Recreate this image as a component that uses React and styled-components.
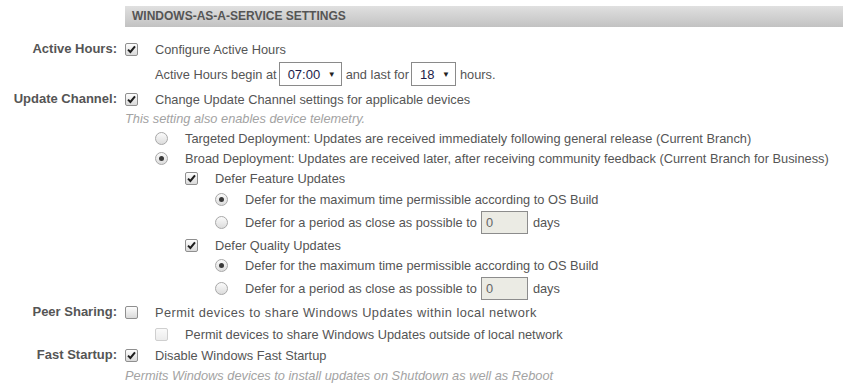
import React from 'react'
import styled, { createGlobalStyle } from 'styled-components'

const GlobalStyle = createGlobalStyle`
  body {
    margin: 0;
    background: #fff;
    font-family: "Liberation Sans", Arial, sans-serif;
    font-size: 12.8px;
    color: #555;
  }
`

const Page = styled.div`
  display: flex;
  flex-direction: column;
  padding-top: 6px;
`

const Field = styled.div`
  display: grid;
  grid-template-columns: 117px 1fr;
  column-gap: 8px;
`

const Label = styled.div`
  text-align: right;
  font-weight: bold;
  font-size: 13px;
  height: ${p => p.$h || 20}px;
  line-height: ${p => p.$h || 20}px;
  white-space: nowrap;
  color: #555;
`

const Header = styled.div`
  height: 21px;
  line-height: 21px;
  padding-left: 7px;
  margin-bottom: 12px;
  background: linear-gradient(#e0e0e0, #c2c2c2);
  font-size: 12px;
  font-weight: bold;
  color: #555;
`

const Lines = styled.div`
  display: flex;
  flex-direction: column;
`

const Row = styled.div`
  display: flex;
  align-items: center;
  height: ${p => p.$h || 20}px;
  padding-left: ${p => (p.$level || 0) * 30}px;
  white-space: nowrap;
`

const Text = styled.span`
  margin-left: 17px;
  letter-spacing: ${p => p.$spacing || 0}px;
`

const Note = styled(Row)`
  font-style: italic;
  color: #a3a3a3;
`

const Box = styled.span`
  flex: none;
  width: 13px;
  height: 13px;
  box-sizing: border-box;
  border: 1px solid ${p => (p.$disabled ? '#cfcfcf' : '#8f8f8f')};
  border-radius: 2px;
  background: ${p => (p.$disabled ? 'linear-gradient(#fafafa, #ececec)' : 'linear-gradient(#fdfdfd, #dadada)')};
  display: inline-flex;
  align-items: center;
  justify-content: center;
`

const Round = styled.span`
  flex: none;
  width: 13px;
  height: 13px;
  box-sizing: border-box;
  border: 1px solid #a8a8a8;
  border-radius: 50%;
  background: linear-gradient(#fbfbfb, #dcdcdc);
  display: inline-flex;
  align-items: center;
  justify-content: center;

  &::after {
    content: '';
    display: ${p => (p.$checked ? 'block' : 'none')};
    width: 5px;
    height: 5px;
    border-radius: 50%;
    background: #3a3a3a;
  }
`

const SelectBox = styled.span`
  display: inline-flex;
  align-items: center;
  justify-content: space-between;
  box-sizing: border-box;
  width: ${p => p.$w}px;
  height: 24px;
  margin: 0 4px 0 2px;
  padding: 0 5px 0 8px;
  border: 1px solid #8a8a8a;
  background: #fff;
  color: #1c1c4a;
  font-size: 13px;
`

const Arrow = styled.span`
  font-size: 8px;
  color: #222;
`

const NumberBox = styled.span`
  display: inline-flex;
  align-items: center;
  box-sizing: border-box;
  width: 47px;
  height: 23px;
  margin: 0 5px 0 4px;
  padding-left: 4px;
  border: 1px solid #8c8c8c;
  background: #ebebe4;
  color: #666;
`

const Check = ({ checked, disabled }) => (
  <Box $disabled={disabled}>
    {checked && (
      <svg width="9" height="9" viewBox="0 0 9 9">
        <path d="M1 4.6 L3.4 7 L8 1.4" fill="none" stroke="#1e1e1e" strokeWidth="2" />
      </svg>
    )}
  </Box>
)

const CheckRow = ({ level, h, checked, disabled, spacing, children }) => (
  <Row $level={level} $h={h}>
    <Check checked={checked} disabled={disabled} />
    <Text $spacing={spacing}>{children}</Text>
  </Row>
)

const RadioRow = ({ level, h, checked, children }) => (
  <Row $level={level} $h={h}>
    <Round $checked={checked} />
    <Text>{children}</Text>
  </Row>
)

const PeriodRow = ({ h }) => (
  <Row $level={3} $h={h}>
    <Round />
    <Text>Defer for a period as close as possible to</Text>
    <NumberBox>0</NumberBox>
    days
  </Row>
)

const Select = ({ value, w }) => (
  <SelectBox $w={w}>
    <span>{value}</span>
    <Arrow>▼</Arrow>
  </SelectBox>
)

export default function App() {
  return (
    <Page>
      <GlobalStyle />
      <Field>
        <span />
        <Header>WINDOWS-AS-A-SERVICE SETTINGS</Header>
      </Field>

      <Field>
        <Label>Active Hours:</Label>
        <Lines>
          <CheckRow checked>Configure Active Hours</CheckRow>
          <Row $level={1} $h={30}>
            Active Hours begin at
            <Select value="07:00" w={63} />
            and last for
            <Select value="18" w={45} />
            hours.
          </Row>
        </Lines>
      </Field>

      <Field>
        <Label>Update Channel:</Label>
        <Lines>
          <CheckRow checked>Change Update Channel settings for applicable devices</CheckRow>
          <Note $h={19}>This setting also enables device telemetry.</Note>
          <RadioRow level={1}>
            Targeted Deployment: Updates are received immediately following general release (Current Branch)
          </RadioRow>
          <RadioRow level={1} checked>
            Broad Deployment: Updates are received later, after receiving community feedback (Current Branch for Business)
          </RadioRow>
          <CheckRow level={2} h={21} checked>Defer Feature Updates</CheckRow>
          <RadioRow level={3} checked>Defer for the maximum time permissible according to OS Build</RadioRow>
          <PeriodRow h={26} />
          <CheckRow level={2} checked>Defer Quality Updates</CheckRow>
          <RadioRow level={3} h={21} checked>Defer for the maximum time permissible according to OS Build</RadioRow>
          <PeriodRow h={25} />
        </Lines>
      </Field>

      <Field>
        <Label $h={22}>Peer Sharing:</Label>
        <Lines>
          <CheckRow h={22} spacing={0.45}>Permit devices to share Windows Updates within local network</CheckRow>
          <CheckRow level={1} h={22} disabled>Permit devices to share Windows Updates outside of local network</CheckRow>
        </Lines>
      </Field>

      <Field>
        <Label>Fast Startup:</Label>
        <Lines>
          <CheckRow checked>Disable Windows Fast Startup</CheckRow>
          <Note>Permits Windows devices to install updates on Shutdown as well as Reboot</Note>
        </Lines>
      </Field>
    </Page>
  )
}
